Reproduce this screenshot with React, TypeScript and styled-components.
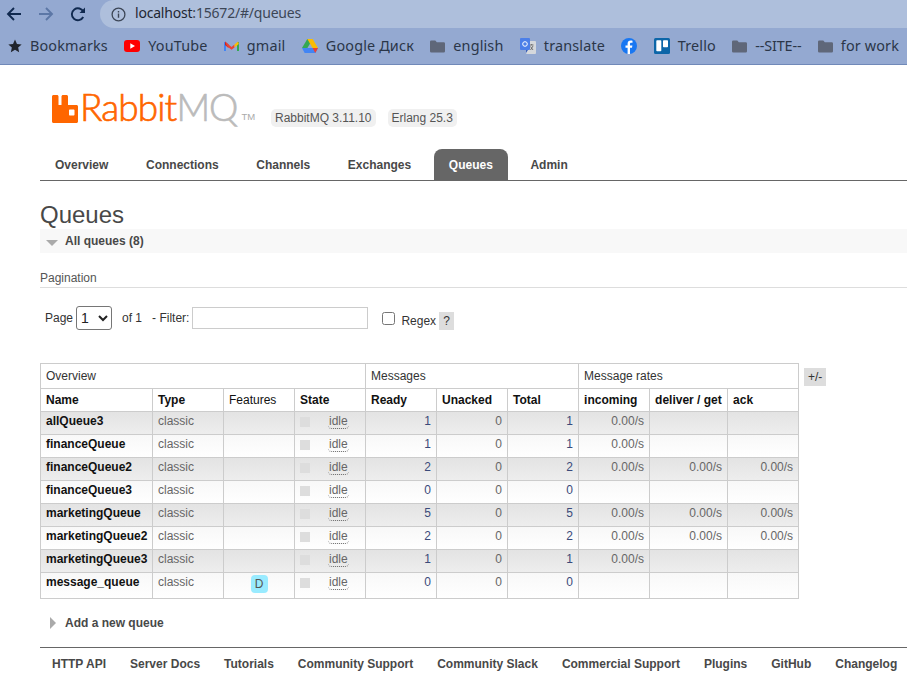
import { createGlobalStyle } from "styled-components";
import styled from "styled-components";

const GlobalStyle = createGlobalStyle`
  html, body {
    margin: 0;
    padding: 0;
    background: #fff;
    overflow: hidden;
  }
  body {
    font-family: "Liberation Sans", Arial, sans-serif;
    font-size: 12px;
    color: #484848;
  }
`;

const Page = styled.div`
  width: 907px;
  height: 697px;
  overflow: hidden;
`;

const BrowserBar = styled.div`
  height: 64px;
  background: #94a9d1;
  border-bottom: 1px solid #7089b8;
  font-family: "Noto Sans", sans-serif;
  color: #2b3648;
`;

const AddressRow = styled.div`
  height: 28px;
  display: flex;
  align-items: center;
`;

const NavIcons = styled.div`
  width: 100px;
  flex: none;
  display: flex;
  gap: 16px;
  padding-left: 6px;
  box-sizing: border-box;
`;

const UrlBar = styled.div`
  flex: 1;
  height: 28px;
  background: #aebfdc;
  border-radius: 14px 0 0 14px;
  display: flex;
  align-items: center;
  gap: 9px;
  padding-left: 11px;
  font-size: 14px;
  letter-spacing: -0.2px;
  color: #3c4656;
`;

const UrlText = styled.span`
  margin-top: -3px;
`;

const UrlHost = styled.span`
  color: #1f2733;
`;

const BookmarkRow = styled.div`
  height: 36px;
  display: flex;
  align-items: center;
  padding-left: 8px;
  white-space: nowrap;
`;

const Bookmark = styled.div`
  display: flex;
  align-items: center;
  gap: 8px;
  margin-right: 16.4px;
  font-size: 14.4px;
  letter-spacing: 0.15px;
  color: #2b3648;
`;

const BookmarkLabel = styled.span<{ $tight?: boolean }>`
  margin-top: -2px;
  letter-spacing: ${(p) => (p.$tight ? "-0.15px" : "inherit")};
`;

const Header = styled.header`
  margin-left: 40px;
`;

const LogoRow = styled.div`
  display: flex;
  align-items: flex-end;
  height: 63px;
  padding-left: 12px;
  margin-top: 1px;
`;

const LogoMark = styled.div`
  display: flex;
  align-items: flex-end;
  gap: 2px;
  height: 33px;
  width: 219px;
  flex: none;
  margin-bottom: 6px;
  font-family: Lato, sans-serif;
  font-weight: 300;
  font-size: 37px;
  line-height: 33px;
  letter-spacing: -0.9px;
  -webkit-text-stroke: 0.7px;
`;

const LogoRabbit = styled.span`
  color: #ff6600;
`;

const LogoMQ = styled.span`
  color: #bbb;
  margin-left: -2px;
`;

const LogoTm = styled.span`
  color: #aaa;
  font-family: "Liberation Sans", sans-serif;
  font-size: 9.5px;
  line-height: 12px;
  letter-spacing: 0;
  -webkit-text-stroke: 0;
  font-weight: normal;
  margin: 0 0 0 2px;
`;

const VersionPill = styled.span<{ $gap: number }>`
  background: #f0f0f0;
  border-radius: 5px;
  padding: 2px 4px;
  line-height: 14px;
  margin-left: ${(p) => p.$gap}px;
  margin-bottom: 2px;
  color: #555;
`;

const Tabs = styled.nav`
  display: flex;
  height: 31px;
  margin-top: 20px;
  border-bottom: 1px solid #666;
  gap: 7.6px;
`;

const Tab = styled.div<{ $active?: boolean }>`
  padding: 0 15px;
  height: 31px;
  line-height: 33px;
  font-weight: bold;
  border-radius: 8px 8px 0 0;
  background: ${(p) => (p.$active ? "#666" : "transparent")};
  color: ${(p) => (p.$active ? "#fff" : "#484848")};
`;

const Main = styled.main`
  margin-left: 40px;
`;

const Title = styled.h1`
  margin: 20px 0 0;
  font-size: 24px;
  font-weight: normal;
  line-height: 28px;
  color: #484848;
`;

const SectionHead = styled.div`
  display: flex;
  align-items: center;
  height: 24px;
  font-weight: bold;
  color: #484848;
`;

const AllQueues = styled(SectionHead)`
  background: #f8f8f8;
  padding-left: 6px;
  gap: 7px;
`;

const AddQueue = styled(SectionHead)`
  padding-left: 10px;
  margin-top: 12px;
  gap: 9px;
`;

const Pagination = styled.div`
  margin-top: 17px;
  height: 17px;
  line-height: 17px;
  border-bottom: 1px solid #ddd;
  color: #555;
`;

const FilterRow = styled.div`
  display: flex;
  align-items: center;
  height: 24px;
  margin-top: 18px;
  padding-left: 5px;
  color: #333;
  white-space: nowrap;
`;

const PageSelect = styled.select`
  width: 36px;
  height: 24px;
  margin: 0 10px 0 3px;
  font-family: "Liberation Sans", sans-serif;
  font-size: 14px;
  border: 1px solid #767676;
  border-radius: 3px;
  background: #fff;
  color: #222;
`;

const FilterInput = styled.input`
  width: 176px;
  height: 22px;
  box-sizing: border-box;
  margin: 0 14px 0 3px;
  border: 1px solid #ccc;
`;

const RegexBox = styled.input`
  width: 13px;
  height: 13px;
  margin: 0 6px 0 0;
`;

const RegexLabel = styled.span`
  margin-top: 6px;
`;

const HelpMark = styled.span`
  display: block;
  width: 15px;
  height: 18px;
  margin: 6px 0 0 3px;
  line-height: 18px;
  text-align: center;
  background: #ddd;
`;

const TableRow = styled.div`
  display: flex;
  align-items: flex-start;
  margin-top: 33px;
`;

const QueueTable = styled.table`
  border-collapse: collapse;
  table-layout: fixed;
  width: 759px;
  flex: none;
  border: 1px solid #ccc;
`;

const GroupCell = styled.th`
  height: 24px;
  padding: 0 5px;
  border: 1px solid #ccc;
  font-weight: normal;
  text-align: left;
  color: #333;
`;

const HeadCell = styled.th<{ $plain?: boolean }>`
  height: 22px;
  padding: 0 5px;
  border: 1px solid #ccc;
  text-align: left;
  color: #111;
  font-weight: ${(p) => (p.$plain ? "normal" : "bold")};
`;

const Row = styled.tr<{ $alt: boolean; $tall?: boolean }>`
  height: ${(p) => (p.$tall ? 26 : 22)}px;
  background: ${(p) =>
    p.$alt
      ? "linear-gradient(#e3e3e3, #eeeeee)"
      : "linear-gradient(#f8f8f8, #fff)"};
`;

const Cell = styled.td<{ $right?: boolean; $link?: boolean }>`
  padding: 0 5px 3px;
  border: 1px solid #ccc;
  vertical-align: top;
  line-height: 19px;
  text-align: ${(p) => (p.$right ? "right" : "left")};
  color: ${(p) => (p.$link ? "#3a4a7a" : "#666")};
  white-space: nowrap;
`;

const NameCell = styled(Cell)`
  font-weight: bold;
  color: #111;
`;

const CenterCell = styled(Cell)`
  text-align: center;
`;

const FeatureBadge = styled.span`
  display: inline-block;
  width: 17px;
  height: 18px;
  margin-top: 2px;
  line-height: 18px;
  text-align: center;
  border-radius: 4px;
  background: #99ebff;
  color: #555;
`;

const StateBox = styled.div`
  display: flex;
  align-items: center;
  gap: 18px;
`;

const StateDot = styled.span`
  width: 10px;
  height: 10px;
  margin-top: 2px;
  background: #ddd;
`;

const StateText = styled.span`
  line-height: 13px;
  margin-top: 3px;
  padding: 0 1px;
  border-bottom: 1px dotted #666;
  border-radius: 0 0 4px 4px;
`;

const ToggleColumns = styled.span`
  display: block;
  margin: 5px 0 0 5px;
  width: 22px;
  height: 18px;
  line-height: 18px;
  text-align: center;
  background: #ddd;
  color: #333;
`;

const Footer = styled.footer`
  display: flex;
  margin-top: 12px;
  border-top: 1px solid #666;
  padding-top: 9px;
  white-space: nowrap;
`;

const FooterLink = styled.span`
  padding: 0 12px;
  font-weight: bold;
  line-height: 14px;
  color: #484848;
`;

const ArrowIcon = ({ color, flip }: { color: string; flip?: boolean }) => (
  <svg width="16" height="16" viewBox="0 0 16 16" fill="none" stroke={color} strokeWidth="1.9"
    style={flip ? { transform: "scaleX(-1)" } : undefined}>
    <path d="M15 8H2M8 2L2 8l6 6" />
  </svg>
);

const ReloadIcon = () => (
  <svg width="16" height="16" viewBox="0 0 16 16" fill="none">
    <path d="M13.2 11a6 6 0 1 1 .2-5" stroke="#10294f" strokeWidth="1.9" />
    <path d="M15 1.5V7H9.5z" fill="#10294f" />
  </svg>
);

const InfoIcon = () => (
  <svg width="15" height="15" viewBox="0 0 15 15" fill="none">
    <circle cx="7.5" cy="7.5" r="6.4" stroke="#3c4656" strokeWidth="1.3" />
    <path d="M7.5 6.5v4.3M7.5 4v1.5" stroke="#3c4656" strokeWidth="1.4" />
  </svg>
);

const StarIcon = () => (
  <svg width="14" height="14" viewBox="0 0 24 24" fill="#20242c">
    <path d="M12 1l3.4 7.4 8 .9-6 5.4 1.7 8L12 18.6 4.900 22.700l1.700-8-6-5.400 8-.9z" />
  </svg>
);

const YoutubeIcon = () => (
  <svg width="16" height="12" viewBox="0 0 16 12">
    <rect width="16" height="12" rx="3" fill="#f00" />
    <path d="M6.300 3.300L11 6l-4.700 2.700z" fill="#fff" />
  </svg>
);

const GmailIcon = () => (
  <svg width="15" height="12" viewBox="0 0 15 12" fill="none">
    <path d="M1 11V2" stroke="#4285f4" strokeWidth="2" />
    <path d="M14 11V2" stroke="#34a853" strokeWidth="2" />
    <path d="M1 1.500l3.500 3V8L1 5z" fill="#c5221f" />
    <path d="M1 1.500L7.500 7l3-2.500v3L7.500 9.800 3 6.300z" fill="#ea4335" />
    <path d="M10.500 4.500L14 1.500 14.800 4l-4.300 3.500z" fill="#fbbc04" />
  </svg>
);

const DriveIcon = () => (
  <svg width="16" height="14" viewBox="0 0 16 14">
    <path d="M5.300 0h5.400l-5.300 9H0z" fill="#34a853" />
    <path d="M5.300 0h5.400L16 9h-5.400z" fill="#fbbc04" />
    <path d="M0 9l2.700 5h10.600L16 9z" fill="#4285f4" />
    <path d="M10.600 9L16 9l-2.700 5z" fill="#ea4335" />
  </svg>
);

const FolderIcon = () => (
  <svg width="15" height="13" viewBox="0 0 15 13">
    <path d="M1.300 0.500h4l1.500 1.800h6.900a1.300 1.300 0 0 1 1.300 1.300v7.600a1.300 1.300 0 0 1-1.300 1.300H1.300A1.300 1.300 0 0 1 0 11.200V1.800A1.300 1.300 0 0 1 1.300 0.500z" fill="#5f6779" />
  </svg>
);

const TranslateIcon = () => (
  <svg width="16" height="16" viewBox="0 0 16 16">
    <rect x="6" y="3" width="10" height="13" rx="1" fill="#d5d8dc" />
    <path d="M10 7l3.500 0M11.700 6v1M10.500 12l2.500-4M10.500 8.500l2.500 3.500" stroke="#666" strokeWidth="0.9" fill="none" />
    <rect x="0" y="0" width="10" height="12" rx="1" fill="#4c7fe8" />
    <path d="M6 15l2-3H6z" fill="#3a5fb8" />
    <circle cx="5" cy="6" r="2.300" fill="none" stroke="#fff" strokeWidth="1" />
  </svg>
);

const FacebookIcon = () => (
  <svg width="16" height="16" viewBox="0 0 16 16">
    <circle cx="8" cy="8" r="8" fill="#1877f2" />
    <path d="M9 16V9.700h2l.4-2.300H9V6c0-.7.300-1.200 1.300-1.200h1.200v-2C11 2.700 10.400 2.600 9.700 2.600 7.800 2.600 6.600 3.800 6.600 5.700v1.700H4.500v2.300h2.100V16z" fill="#fff" />
  </svg>
);

const TrelloIcon = () => (
  <svg width="16" height="16" viewBox="0 0 16 16">
    <rect width="16" height="16" rx="1.500" fill="#0c66a8" />
    <rect x="2.300" y="2.300" width="5" height="11" rx="0.800" fill="#fff" />
    <rect x="9" y="2.300" width="5" height="7" rx="0.800" fill="#fff" />
  </svg>
);

const RabbitMark = () => (
  <svg width="26" height="28" viewBox="0 0 26 28" style={{ flex: "none" }}>
    <path fillRule="evenodd" fill="#ff6600"
      d="M0 1.500C0 .7.700 0 1.500 0h3.500c.8 0 1.500.7 1.500 1.500V10h3V1.500C9.500.7 10.200 0 11 0h3.500c.8 0 1.500.7 1.500 1.500V10h8.500c.8 0 1.500.7 1.500 1.500v15c0 .8-.7 1.500-1.500 1.500H1.500C.7 28 0 27.300 0 26.500zM17 15.500v4c0 .6.400 1 1 1h3.500c.6 0 1-.4 1-1v-4c0-.6-.4-1-1-1H18c-.6 0-1 .4-1 1z" />
  </svg>
);

const Triangle = ({ open }: { open: boolean }) =>
  open ? (
    <svg width="12" height="6" viewBox="0 0 12 6" style={{ flex: "none", marginTop: 3 }}>
      <path d="M0 0h12L6 6z" fill="#aaa" />
    </svg>
  ) : (
    <svg width="6" height="12" viewBox="0 0 6 12" style={{ flex: "none" }}>
      <path d="M0 0l6 6-6 6z" fill="#aaa" />
    </svg>
  );

const tabs = ["Overview", "Connections", "Channels", "Exchanges", "Queues", "Admin"];

const footerLinks = [
  "HTTP API",
  "Server Docs",
  "Tutorials",
  "Community Support",
  "Community Slack",
  "Commercial Support",
  "Plugins",
  "GitHub",
  "Changelog",
];

const bookmarks = [
  { icon: <YoutubeIcon />, label: "YouTube" },
  { icon: <GmailIcon />, label: "gmail" },
  { icon: <DriveIcon />, label: "Google Диск" },
  { icon: <FolderIcon />, label: "english" },
  { icon: <TranslateIcon />, label: "translate" },
  { icon: <FacebookIcon />, label: "" },
  { icon: <TrelloIcon />, label: "Trello" },
  { icon: <FolderIcon />, label: "--SITE--", tight: true },
  { icon: <FolderIcon />, label: "for work" },
];

type Queue = {
  name: string;
  ready: number;
  total: number;
  incoming?: string;
  deliver?: string;
  ack?: string;
  durable?: boolean;
};

const queues: Queue[] = [
  { name: "allQueue3", ready: 1, total: 1, incoming: "0.00/s" },
  { name: "financeQueue", ready: 1, total: 1, incoming: "0.00/s" },
  { name: "financeQueue2", ready: 2, total: 2, incoming: "0.00/s", deliver: "0.00/s", ack: "0.00/s" },
  { name: "financeQueue3", ready: 0, total: 0 },
  { name: "marketingQueue", ready: 5, total: 5, incoming: "0.00/s", deliver: "0.00/s", ack: "0.00/s" },
  { name: "marketingQueue2", ready: 2, total: 2, incoming: "0.00/s", deliver: "0.00/s", ack: "0.00/s" },
  { name: "marketingQueue3", ready: 1, total: 1, incoming: "0.00/s" },
  { name: "message_queue", ready: 0, total: 0, durable: true },
];

const columnWidths = [112, 71, 71, 71, 71, 71, 71, 71, 78, 71];

export default function App() {
  return (
    <Page>
      <GlobalStyle />
      <BrowserBar>
        <AddressRow>
          <NavIcons>
            <ArrowIcon color="#10294f" />
            <ArrowIcon color="#5c77a6" flip />
            <ReloadIcon />
          </NavIcons>
          <UrlBar>
            <InfoIcon />
            <UrlText>
              <UrlHost>localhost</UrlHost>:15672/#/queues
            </UrlText>
          </UrlBar>
        </AddressRow>
        <BookmarkRow>
          <Bookmark>
            <StarIcon />
            <BookmarkLabel>Bookmarks</BookmarkLabel>
          </Bookmark>
          {bookmarks.map((b, i) => (
            <Bookmark key={i}>
              {b.icon}
              {b.label && <BookmarkLabel $tight={b.tight}>{b.label}</BookmarkLabel>}
            </Bookmark>
          ))}
        </BookmarkRow>
      </BrowserBar>

      <Header>
        <LogoRow>
          <LogoMark>
            <RabbitMark />
            <LogoRabbit>Rabbit</LogoRabbit>
            <LogoMQ>MQ</LogoMQ>
            <LogoTm>TM</LogoTm>
          </LogoMark>
          <VersionPill $gap={0}>RabbitMQ 3.11.10</VersionPill>
          <VersionPill $gap={12}>Erlang 25.3</VersionPill>
        </LogoRow>
        <Tabs>
          {tabs.map((t) => (
            <Tab key={t} $active={t === "Queues"}>
              {t}
            </Tab>
          ))}
        </Tabs>
      </Header>

      <Main>
        <Title>Queues</Title>
        <AllQueues>
          <Triangle open />
          All queues (8)
        </AllQueues>
        <Pagination>Pagination</Pagination>
        <FilterRow>
          Page
          <PageSelect defaultValue="1">
            <option>1</option>
          </PageSelect>
          of 1&nbsp;&nbsp;&nbsp;- Filter:
          <FilterInput />
          <RegexBox type="checkbox" />
          <RegexLabel>Regex</RegexLabel>
          <HelpMark>?</HelpMark>
        </FilterRow>
        <TableRow>
          <QueueTable>
            <colgroup>
              {columnWidths.map((w, i) => (
                <col key={i} width={w} />
              ))}
            </colgroup>
            <thead>
              <tr>
                <GroupCell colSpan={4}>Overview</GroupCell>
                <GroupCell colSpan={3}>Messages</GroupCell>
                <GroupCell colSpan={3}>Message rates</GroupCell>
              </tr>
              <tr>
                <HeadCell>Name</HeadCell>
                <HeadCell>Type</HeadCell>
                <HeadCell $plain>Features</HeadCell>
                <HeadCell>State</HeadCell>
                <HeadCell>Ready</HeadCell>
                <HeadCell>Unacked</HeadCell>
                <HeadCell>Total</HeadCell>
                <HeadCell>incoming</HeadCell>
                <HeadCell>deliver / get</HeadCell>
                <HeadCell>ack</HeadCell>
              </tr>
            </thead>
            <tbody>
              {queues.map((q, i) => (
                <Row key={q.name} $alt={i % 2 === 0} $tall={q.durable}>
                  <NameCell>{q.name}</NameCell>
                  <Cell>classic</Cell>
                  <CenterCell>{q.durable && <FeatureBadge>D</FeatureBadge>}</CenterCell>
                  <Cell>
                    <StateBox>
                      <StateDot />
                      <StateText>idle</StateText>
                    </StateBox>
                  </Cell>
                  <Cell $right $link>{q.ready}</Cell>
                  <Cell $right>0</Cell>
                  <Cell $right $link>{q.total}</Cell>
                  <Cell $right>{q.incoming}</Cell>
                  <Cell $right>{q.deliver}</Cell>
                  <Cell $right>{q.ack}</Cell>
                </Row>
              ))}
            </tbody>
          </QueueTable>
          <ToggleColumns>+/-</ToggleColumns>
        </TableRow>
        <AddQueue>
          <Triangle open={false} />
          Add a new queue
        </AddQueue>
        <Footer>
          {footerLinks.map((l) => (
            <FooterLink key={l}>{l}</FooterLink>
          ))}
        </Footer>
      </Main>
    </Page>
  );
}
